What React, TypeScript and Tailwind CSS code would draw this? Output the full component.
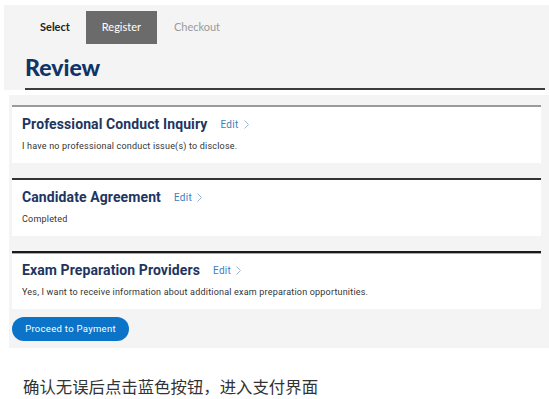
const sans = "font-['Lato','Open_Sans',sans-serif]";
const head = "font-['Roboto','Noto_Sans',sans-serif]";

function EditLink() {
  return (
    <span className={`ml-[13px] inline-flex items-center gap-[5px] text-[10px] tracking-[0.3px] text-[#3f7dbb] ${head}`}>
      Edit
      <svg width="5" height="9" viewBox="0 0 5 9" fill="none" stroke="#9db6d3" strokeWidth="1">
        <path d="M0.5 0.5 L4.5 4.5 L0.5 8.5" />
      </svg>
    </span>
  );
}

function ReviewCard({
  title,
  detail,
  borderClass,
}: {
  title: string;
  detail: string;
  borderClass: string;
}) {
  return (
    <article className={`h-[58px] bg-white pl-[10px] pt-[8px] ${borderClass}`}>
      <div className="flex items-center">
        <h3 className={`text-[14px] font-bold leading-[18px] tracking-[0.1px] text-[#1e3560] ${head}`}>{title}</h3>
        <EditLink />
      </div>
      <p className={`mt-[7px] text-[9px] leading-[12px] tracking-[0.2px] text-[#333] ${head}`}>{detail}</p>
    </article>
  );
}

export default function App() {
  return (
    <div className="relative h-[399px] w-[549px] overflow-hidden bg-white">
      <header className="ml-[4px] mt-[5px] h-[85px] bg-[#f4f4f4] pt-[6px]">
        <nav className={`flex h-[33px] items-stretch text-[11px] ${sans}`}>
          <span className="ml-[36px] flex items-center font-bold text-[#222]">Select</span>
          <span className="ml-[16px] flex w-[71px] items-center justify-center bg-[#6b6b6b] text-white">
            Register
          </span>
          <span className="ml-[17px] flex items-center text-[#9a9a9a]">Checkout</span>
        </nav>
        <h1 className={`ml-[21px] mt-[9px] text-[23px] font-black leading-[28px] text-[#0f3468] ${sans}`}>
          Review
        </h1>
        <div className="ml-[21px] mt-[7px] h-[2px] w-[520px] bg-[#3c3c3c]" />
      </header>

      <main className="ml-[9px] mt-[5px] h-[253px] bg-[#f4f4f4] pl-[3px] pr-[8px] pt-[10px]">
        <div className="flex flex-col gap-[15px]">
          <ReviewCard
            title="Professional Conduct Inquiry"
            detail="I have no professional conduct issue(s) to disclose."
            borderClass="border-t-2 border-[#9a9a9a]"
          />
          <ReviewCard
            title="Candidate Agreement"
            detail="Completed"
            borderClass="border-t-2 border-[#333]"
          />
          <ReviewCard
            title="Exam Preparation Providers"
            detail="Yes, I want to receive information about additional exam preparation opportunities."
            borderClass="border-t-2 border-[#1a1a1a] shadow-[inset_0_1px_0_#a8a8a8]"
          />
        </div>
        <button
          className={`mt-[8px] h-[24px] w-[117px] rounded-full bg-[#0b74c8] text-[9.5px] tracking-[0.3px] text-white ${head}`}
        >
          Proceed to Payment
        </button>
      </main>

      <p className="ml-[23px] mt-[28px] text-[16.4px] leading-[20px] text-[#333] font-['Noto_Sans_CJK_SC',sans-serif]">
        确认无误后点击蓝色按钮，进入支付界面
      </p>
    </div>
  );
}
